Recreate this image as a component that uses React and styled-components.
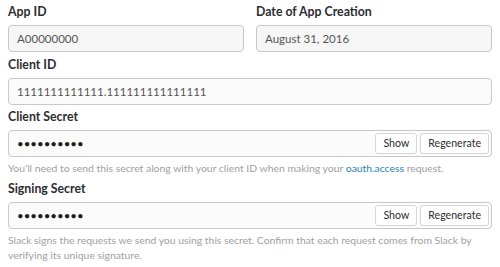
import React from "react";
import styled, { createGlobalStyle } from "styled-components";

const Global = createGlobalStyle`
  html, body { margin: 0; padding: 0; background: #fff; }
  body { font-family: Lato, "Noto Sans", sans-serif; }
`;

const Page = styled.div`
  padding: 3px 8px 0 8px;
  width: 484px;
  display: flex;
  flex-direction: column;
`;

const Row = styled.div`
  display: grid;
  grid-template-columns: 1fr 1fr;
  column-gap: 12px;
`;

const Field = styled.div`
  display: flex;
  flex-direction: column;
  margin-bottom: ${(p) => p.$mb ?? 4}px;
`;

const Label = styled.label`
  font-size: 12.3px;
  font-weight: 700;
  color: #2c2d30;
  line-height: 18px;
  margin-bottom: 4px;
`;

const Box = styled.div`
  box-sizing: border-box;
  height: 27px;
  border: 1px solid #c8c8c8;
  border-radius: 4px;
  background: ${(p) => (p.$muted ? "#f6f6f6" : "#fbfbfb")};
  display: flex;
  align-items: center;
  padding: 0 2px 0 8px;
  color: #555;
`;

const Value = styled.span`
  flex: 1;
  font-size: 11.5px;
  color: #555;
`;

const Dots = styled.span`
  flex: 1;
  font-size: 11.5px;
  letter-spacing: 0;
  color: #1d1d1d;
`;

const Button = styled.button`
  box-sizing: border-box;
  height: 21px;
  padding: 0 7px;
  margin-left: 3px;
  border: 1px solid #d6d6d6;
  border-radius: 3px;
  background: #fff;
  font-family: Lato, "Noto Sans", sans-serif;
  font-size: 10.6px;
  color: #2c2d30;
  line-height: 19px;
`;

const Help = styled.p`
  margin: 4px 0 0 0;
  font-size: 10.4px;
  line-height: 15px;
  color: #a0a0a0;
`;

const Link = styled.a`
  color: #2a80b9;
  text-decoration: none;
`;

export default function App() {
  const dots = "\u2022".repeat(10);
  return (
    <>
      <Global />
      <Page>
        <Row>
          <Field>
            <Label>App ID</Label>
            <Box $muted>
              <Value>A00000000</Value>
            </Box>
          </Field>
          <Field>
            <Label>Date of App Creation</Label>
            <Box $muted>
              <Value>August 31, 2016</Value>
            </Box>
          </Field>
        </Row>
        <Field $mb={3}>
          <Label>Client ID</Label>
          <Box>
            <Value>1111111111111.111111111111111</Value>
          </Box>
        </Field>
        <Field $mb={4}>
          <Label>Client Secret</Label>
          <Box>
            <Dots>{dots}</Dots>
            <Button>Show</Button>
            <Button>Regenerate</Button>
          </Box>
          <Help>
            You'll need to send this secret along with your client ID when making your{" "}
            <Link href="#">oauth.access</Link> request.
          </Help>
        </Field>
        <Field>
          <Label>Signing Secret</Label>
          <Box>
            <Dots>{dots}</Dots>
            <Button>Show</Button>
            <Button>Regenerate</Button>
          </Box>
          <Help>
            Slack signs the requests we send you using this secret. Confirm that each request
            comes from Slack by verifying its unique signature.
          </Help>
        </Field>
      </Page>
    </>
  );
}
